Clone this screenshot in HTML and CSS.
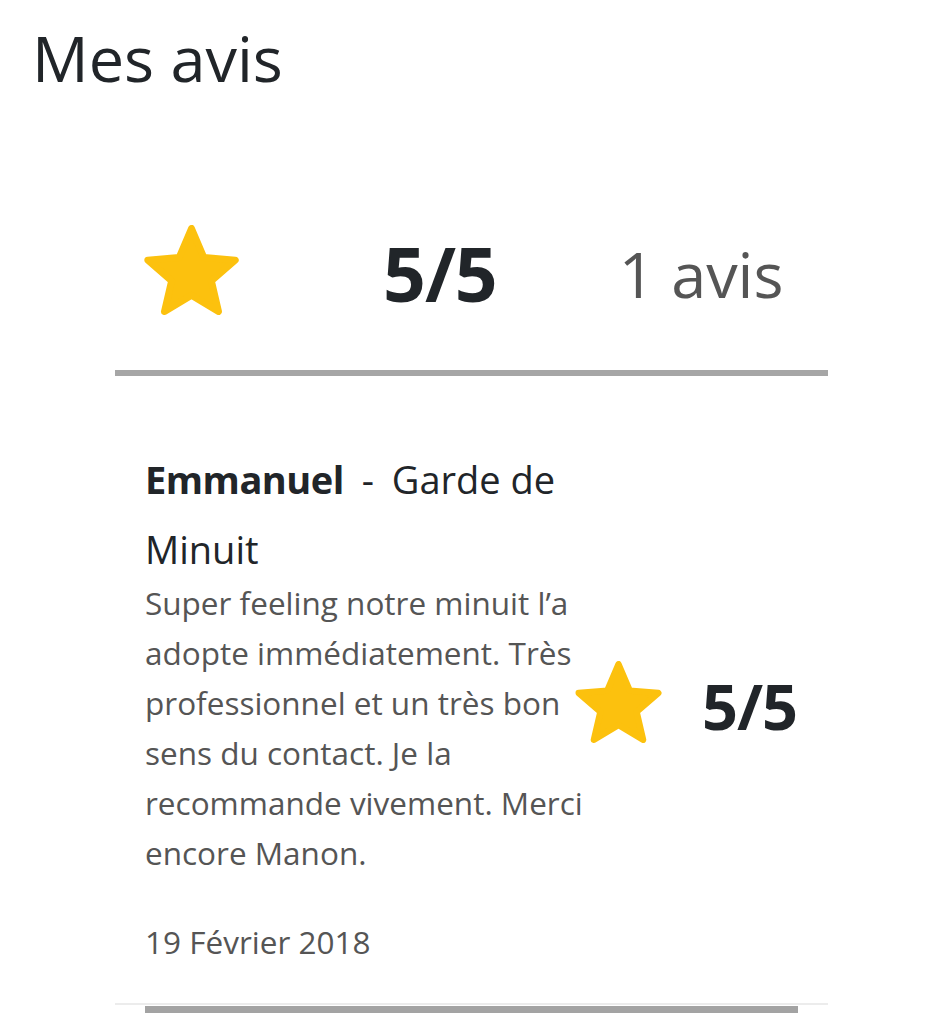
FILE: index.html
```html
<!DOCTYPE html>
<html lang="fr">
<head>
    <meta charset="UTF-8">
    <meta name="viewport" content="width=device-width, initial-scale=1.0">
    <title>Mes avis</title>
    <link rel="stylesheet" href="styles.css">
</head>
<body>
    <h1>Mes avis</h1>

    <div class="reviews">
        <div class="summary">
            <svg class="star star-big" viewBox="1.2 1.2 21.6 20.6" aria-hidden="true">
                <path d="M12 17.27L18.18 21l-1.64-7.03L22 9.24l-7.19-.61L12 2 9.19 8.63 2 9.24l5.46 4.73L5.82 21z"/>
            </svg>
            <span class="summary-score">5/5</span>
            <span class="summary-count">1 avis</span>
        </div>

        <div class="review">
            <div class="review-text">
                <div class="review-title">
                    <strong>Emmanuel</strong> <span class="dash">-</span> Garde de Minuit
                </div>
                <p class="review-comment">Super feeling notre minuit l’a adopte immédiatement. Très professionnel et un très bon sens du contact. Je la recommande vivement. Merci encore Manon.</p>
                <div class="review-date">19 Février 2018</div>
            </div>
            <div class="review-score">
                <svg class="star" viewBox="1.2 1.2 21.6 20.6" aria-hidden="true">
                    <path d="M12 17.27L18.18 21l-1.64-7.03L22 9.24l-7.19-.61L12 2 9.19 8.63 2 9.24l5.46 4.73L5.82 21z"/>
                </svg>
                <span>5/5</span>
            </div>
        </div>
        <div class="review-divider"></div>
    </div>
</body>
</html>
```

FILE: styles.css
```css
body {
    margin: 0;
    background: #ffffff;
    color: #212529;
    font-family: 'Open Sans', 'Noto Sans', sans-serif;
}
h1 {
    margin: 26px 0 0 32px;
    font-size: 63px;
    font-weight: 400;
    line-height: 1;
}
.reviews {
    margin: 87px 0 0 115px;
    width: 713px;
}
.summary {
    display: flex;
    align-items: center;
    height: 194px;
    padding-left: 28px;
    border-bottom: 6px solid #a6a6a6;
}
.star {
    width: 87px;
    height: 82px;
    fill: #fcc10e;
    stroke: #fcc10e;
    stroke-width: 1.6;
    stroke-linejoin: round;
    flex-shrink: 0;
}
.star-big {
    width: 97px;
    height: 90px;
    margin-bottom: 6px;
}
.summary-score {
    margin-left: 143px;
    font-size: 75px;
    font-weight: 700;
    line-height: 1;
    letter-spacing: -1px;
}
.summary-count {
    margin-left: 122px;
    font-size: 63px;
    line-height: 1;
    color: #555555;
}
.review {
    display: flex;
    align-items: center;
    padding: 68px 30px 36px;
    border-bottom: 2px solid #ececec;
}
.review-text {
    width: 452px;
    flex-shrink: 0;
}
.review-title {
    font-size: 38px;
    line-height: 70px;
}
.review-title strong {
    font-weight: 700;
    letter-spacing: -0.5px;
}
.dash {
    padding: 0 8px;
}
.review-comment {
    margin: -6px 0 0;
    font-size: 31.5px;
    line-height: 50px;
    color: #555555;
}
.review-date {
    margin-top: 39px;
    font-size: 31.5px;
    line-height: 50px;
    color: #555555;
}
.review-score {
    display: flex;
    align-items: center;
    gap: 40px;
    margin: 0 0 0 -22px;
    font-size: 63px;
    font-weight: 700;
    line-height: 1;
    letter-spacing: -1px;
}
.review-score .star {
    margin-bottom: 8px;
}
.review-divider {
    height: 7px;
    margin: 1px 30px 0;
    background: #a3a3a3;
}
```
